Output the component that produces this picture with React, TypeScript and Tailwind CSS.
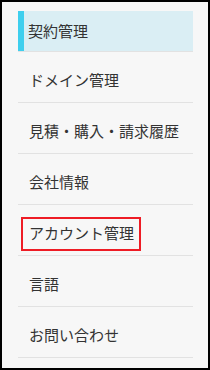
const items = ["ドメイン管理", "見積・購入・請求履歴", "会社情報", "アカウント管理", "言語", "お問い合わせ"];

export default function App() {
  return (
    <div
      className="w-[210px] h-[370px] border-2 border-black bg-[#f7f7f7] pt-[9px] pl-4 pr-[15px] relative"
      style={{ fontFamily: '"Noto Sans CJK JP", "Noto Sans", sans-serif' }}
    >
      <ul className="text-[15px] text-[#333333]">
        <li className="h-[40px] flex items-center bg-[#daeef4] border-l-[6px] border-[#3fcfee] pl-1">
          契約管理
        </li>
        <li className="h-px bg-[#e2e2e2]" />
        {items.map((name) => (
          <li key={name} className="h-[51px] flex items-center pl-[11px] pt-[6px] border-b border-[#e2e2e2]">
            {name}
          </li>
        ))}
      </ul>
      {/* 注釈の赤枠 */}
      <div className="absolute left-[19px] top-[215px] w-[120px] h-[34px] border-2 border-[#ee1c25]" />
    </div>
  );
}
